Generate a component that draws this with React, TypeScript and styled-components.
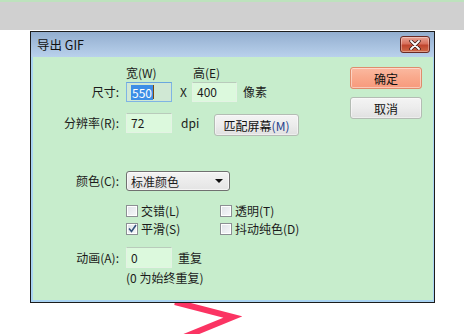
import React from "react";
import styled, { createGlobalStyle } from "styled-components";

const Global = createGlobalStyle`
  html, body { margin: 0; padding: 0; background: #ffffff; }
  body {
    font-family: "Noto Sans CJK SC", "Noto Sans", "Liberation Sans", sans-serif;
    font-size: 12px;
    color: #1b1b1b;
    width: 464px;
    height: 334px;
    overflow: hidden;
  }
`;

const TopBand = styled.div`
  height: 28px;
  background: #d0d0d0;
  border-top: 2px solid #bde2bd;
`;

const Dialog = styled.div`
  margin: 1px 0 0 30px;
  width: 403px;
  height: 270px;
  border: 1px solid #1c1c1c;
  display: flex;
  flex-direction: column;
  background: #a9d3f2;
`;

const TitleBar = styled.div`
  height: 25px;
  flex: none;
  display: flex;
  align-items: center;
  justify-content: space-between;
  padding: 0 4px 0 6px;
  background: linear-gradient(#93aecf, #b9d1ec);
`;

const Title = styled.span`
  font-size: 12.5px;
  color: #111;
  line-height: 14px;
  margin-top: 1px;
`;

const CloseButton = styled.div`
  width: 28px;
  height: 15px;
  border: 1px solid #6a2a24;
  border-radius: 3px;
  background: linear-gradient(#e8a395 0%, #d8705c 45%, #c0452e 55%, #cf6a48 100%);
  display: flex;
  align-items: center;
  justify-content: center;
  box-shadow: inset 0 0 0 1px rgba(255, 255, 255, 0.35);
`;

const Body = styled.div`
  flex: 1;
  margin: 0 1px 2px 2px;
  background: #c7edcc;
  display: flex;
`;

const Form = styled.div`
  flex: 1;
  padding-top: 9px;
  display: flex;
  flex-direction: column;
`;

const Grid = styled.div<{ $mt?: number; $rowGap?: number }>`
  display: grid;
  grid-template-columns: 86px auto;
  column-gap: 7px;
  row-gap: ${(p) => p.$rowGap ?? 0}px;
  margin-top: ${(p) => p.$mt ?? 0}px;
  align-items: center;
`;

const Label = styled.div`
  text-align: right;
  line-height: 14px;
  white-space: nowrap;
`;

const Line = styled.div`
  display: flex;
  align-items: center;
  white-space: nowrap;
`;

const Text = styled.span<{ $w?: number; $ml?: number }>`
  line-height: 14px;
  ${(p) => (p.$w ? `width: ${p.$w}px;` : "")}
  ${(p) => (p.$ml ? `margin-left: ${p.$ml}px;` : "")}
`;

const Input = styled.div<{ $focused?: boolean; $w?: number; $h?: number }>`
  box-sizing: border-box;
  width: ${(p) => p.$w ?? 46}px;
  height: ${(p) => p.$h ?? 20}px;
  padding: 0 4px;
  display: flex;
  align-items: center;
  border: 1px solid ${(p) => (p.$focused ? "#7fb4e4" : "#e4f2e4")};
  border-top-color: ${(p) => (p.$focused ? "#6aa6de" : "#b9cbbb")};
  background: ${(p) => (p.$focused ? "#d0e8d4" : "#dcf9dd")};
  color: #1b1b1b;
  line-height: 14px;
`;

const Selected = styled.span`
  background: #3d8ee6;
  color: #ffffff;
  padding: 0 1px;
  line-height: 15px;
`;

const Caret = styled.span`
  width: 1px;
  height: 14px;
  background: #7a4a10;
`;

const PushButton = styled.div<{ $primary?: boolean; $w?: number; $mt?: number }>`
  box-sizing: border-box;
  width: ${(p) => p.$w ?? 72}px;
  height: 22px;
  margin-top: ${(p) => p.$mt ?? 0}px;
  border-radius: 3px;
  display: flex;
  align-items: center;
  justify-content: center;
  white-space: nowrap;
  color: #111;
  border: 1px solid ${(p) => (p.$primary ? "#df8c6c" : "#b4bcb4")};
  background: ${(p) =>
    p.$primary
      ? "linear-gradient(#fbb9a0 0%, #f9a88b 50%, #f79a7c 100%)"
      : "linear-gradient(#f4f4f4 0%, #ececec 50%, #e0e0e0 100%)"};
  box-shadow: inset 0 0 0 1px rgba(255, 255, 255, 0.45);
`;

const Mnemonic = styled.span`
  color: #1f3f8a;
`;

const Select = styled.div`
  box-sizing: border-box;
  width: 104px;
  height: 20px;
  border: 1px solid #707070;
  border-radius: 3px;
  background: linear-gradient(#f3f3f3, #e4e4e4);
  display: flex;
  align-items: center;
  justify-content: space-between;
  padding: 0 6px 0 4px;
  box-shadow: inset 0 0 0 1px rgba(255, 255, 255, 0.6);
`;

const Arrow = styled.span`
  width: 0;
  height: 0;
  border-left: 4px solid transparent;
  border-right: 4px solid transparent;
  border-top: 4px solid #111;
`;

const CheckGrid = styled.div`
  display: grid;
  grid-template-columns: 94px auto;
  grid-auto-rows: 13px;
  row-gap: 5px;
`;

const CheckItem = styled.div`
  display: flex;
  align-items: center;
  gap: 3px;
  height: 13px;
  line-height: 13px;
  white-space: nowrap;
`;

const Box = styled.span`
  box-sizing: border-box;
  width: 12px;
  height: 12px;
  border: 1px solid #8c8f94;
  background: linear-gradient(135deg, #dfe3e8, #f7f8fa);
  box-shadow: inset 0 0 0 1px #ffffff;
  display: flex;
  align-items: center;
  justify-content: center;
`;

const Side = styled.div`
  width: 72px;
  margin-right: 11px;
  padding-top: 10px;
  display: flex;
  flex-direction: column;
  gap: 8px;
`;

const Chevron = styled.svg`
  display: block;
  margin-left: 172px;
`;

const Check = ({ checked, label }: { checked?: boolean; label: string }) => (
  <CheckItem>
    <Box>
      {checked && (
        <svg width="9" height="9" viewBox="0 0 9 9">
          <path d="M1 4.5 L3.5 7.5 L8 1" fill="none" stroke="#33527a" strokeWidth="1.6" />
        </svg>
      )}
    </Box>
    <span>{label}</span>
  </CheckItem>
);

export default function App() {
  return (
    <>
      <Global />
      <TopBand />
      <Dialog>
        <TitleBar>
          <Title>导出 GIF</Title>
          <CloseButton>
            <svg width="12" height="10" viewBox="0 0 12 10">
              <path d="M2 1 L10 9 M10 1 L2 9" stroke="#3a1a16" strokeWidth="3.4" strokeLinecap="round" />
              <path d="M2 1 L10 9 M10 1 L2 9" stroke="#ffffff" strokeWidth="1.8" strokeLinecap="round" />
            </svg>
          </CloseButton>
        </TitleBar>
        <Body>
          <Form>
            <Grid>
              <span />
              <Line>
                <Text $w={67}>宽(W)</Text>
                <Text>高(E)</Text>
              </Line>
            </Grid>
            <Grid $mt={2} $rowGap={8}>
              <Label>尺寸:</Label>
              <Line>
                <Input $focused>
                  <Selected>550</Selected>
                  <Caret />
                </Input>
                <Text $w={12} $ml={8}>X</Text>
                <Input $w={45}>400</Input>
                <Text $ml={6}>像素</Text>
              </Line>
              <Label>分辨率(R):</Label>
              <Line>
                <Input>72</Input>
                <Text $w={33} $ml={9}>dpi</Text>
                <PushButton $w={85} $mt={4}>
                  匹配屏幕<Mnemonic>(M)</Mnemonic>
                </PushButton>
              </Line>
            </Grid>
            <Grid $mt={35}>
              <Label>颜色(C):</Label>
              <Select>
                <span>标准颜色</span>
                <Arrow />
              </Select>
            </Grid>
            <Grid $mt={13}>
              <span />
              <CheckGrid>
                <Check label="交错(L)" />
                <Check label="透明(T)" />
                <Check checked label="平滑(S)" />
                <Check label="抖动纯色(D)" />
              </CheckGrid>
            </Grid>
            <Grid $mt={12} $rowGap={3}>
              <Label>动画(A):</Label>
              <Line>
                <Input $h={21}>0</Input>
                <Text $ml={6}>重复</Text>
              </Line>
              <span />
              <Text>(0 为始终重复)</Text>
            </Grid>
          </Form>
          <Side>
            <PushButton $primary>确定</PushButton>
            <PushButton>取消</PushButton>
          </Side>
        </Body>
      </Dialog>
      <Chevron width="70" height="32" viewBox="0 0 70 32">
        <path d="M3 -1 L61 14 L12 34" fill="none" stroke="#fb3463" strokeWidth="6" strokeLinejoin="miter" />
      </Chevron>
    </>
  );
}
